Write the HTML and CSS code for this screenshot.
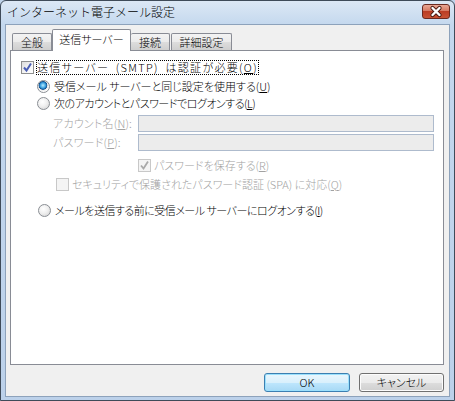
FILE: index.html
```html
<!DOCTYPE html>
<html lang="ja">
<head>
<meta charset="utf-8">
<title>インターネット電子メール設定</title>
<link rel="stylesheet" href="styles.css">
</head>
<body>
<div class="window">
  <div class="titlebar">
    <span class="title">インターネット電子メール設定</span>
    <span class="close">
      <svg width="28" height="15" viewBox="0 0 28 15">
        <path d="M10.5 4 L17.5 11 M17.5 4 L10.5 11" stroke="#4a1a12" stroke-width="4.2" stroke-linecap="round"/>
        <path d="M10.5 4 L17.5 11 M17.5 4 L10.5 11" stroke="#ffffff" stroke-width="2.4" stroke-linecap="round"/>
      </svg>
    </span>
  </div>
  <div class="client">
    <div class="tabs">
      <div class="tab t1">全般</div>
      <div class="tab sel">送信サーバー</div>
      <div class="tab t3">接続</div>
      <div class="tab t4">詳細設定</div>
    </div>
    <div class="panel">
      <div class="row r1">
        <span class="chk on"><svg width="11" height="11" viewBox="0 0 11 11"><path d="M2 5.5 L4.5 8.5 L9 1.5" fill="none" stroke="#4b5fb5" stroke-width="2"/></svg></span>
        <span class="lbl focus smtp">送信サーバー (SMTP) は認証が必要(<u>O</u>)</span>
      </div>
      <div class="row r2 ind">
        <span class="radio on"></span>
        <span class="lbl">受信メール サーバーと同じ設定を使用する(<u>U</u>)</span>
      </div>
      <div class="row r3 ind">
        <span class="radio"></span>
        <span class="lbl tight">次のアカウントとパスワードでログオンする(<u>L</u>)</span>
      </div>
      <div class="row r4 field">
        <span class="flbl dis">アカウント名(<u>N</u>):</span>
        <span class="input"></span>
      </div>
      <div class="row r5 field">
        <span class="flbl dis">パスワード(<u>P</u>):</span>
        <span class="input"></span>
      </div>
      <div class="row r6 save">
        <span class="chk disc"><svg width="11" height="11" viewBox="0 0 11 11"><path d="M2 5.5 L4.5 8.5 L9 1.5" fill="none" stroke="#a9a9a9" stroke-width="1.8"/></svg></span>
        <span class="lbl dis">パスワードを保存する(<u>R</u>)</span>
      </div>
      <div class="row r7 spa">
        <span class="chk disc"></span>
        <span class="lbl dis">セキュリティで保護されたパスワード認証 (SPA) に対応(<u>Q</u>)</span>
      </div>
      <div class="row r8 ind3">
        <span class="radio"></span>
        <span class="lbl tight">メールを送信する前に受信メール サーバーにログオンする(<u>I</u>)</span>
      </div>
    </div>
    <div class="buttons">
      <span class="btn ok">OK</span>
      <span class="btn cancel">キャンセル</span>
    </div>
  </div>
</div>
</body>
</html>
```
FILE: styles.css
```css
html, body {
  margin: 0;
  padding: 0;
  width: 455px;
  height: 401px;
  overflow: hidden;
  background: #bfd3ea;
}
body {
  font-family: "Noto Sans CJK JP", "Noto Sans", sans-serif;
  font-size: 11px;
  font-weight: 300;
  font-feature-settings: "palt";
  color: #000;
}
.window {
  width: 455px;
  height: 401px;
  box-sizing: border-box;
  border: 1px solid #3f4b59;
  border-radius: 6px 6px 0 0;
  background: linear-gradient(#dce8f5 0, #c4d8ee 24px, #bcd1ea 100%);
  padding: 0 4px 3px 4px;
  display: flex;
  flex-direction: column;
}
.titlebar {
  height: 23px;
  display: flex;
  align-items: center;
  justify-content: space-between;
  flex: none;
}
.title {
  padding-left: 2px;
  font-size: 12px;
  font-feature-settings: normal;
  line-height: 16px;
  margin-top: -2px;
}
.close {
  width: 28px;
  height: 15px;
  margin-top: -3px;
  box-sizing: border-box;
  border: 1px solid #6b2a20;
  border-radius: 3px;
  background: linear-gradient(#eaa794 0, #d67a63 45%, #bb3d24 50%, #c85234 100%);
  display: flex;
}
.close svg { display: block; margin: -1px; }
.client {
  flex: 1;
  background: #f0f0f0;
  border: 1px solid #8da2bb;
  padding: 4px 5px 0 4px;
  display: flex;
  flex-direction: column;
}
.tabs {
  display: flex;
  align-items: flex-end;
  height: 21px;
  padding-left: 2px;
  position: relative;
  z-index: 2;
}
.tab {
  box-sizing: border-box;
  height: 17px;
  border: 1px solid #898c95;
  border-bottom: none;
  background: linear-gradient(#f3f3f3 0, #ebebeb 50%, #dddddd 51%, #cfcfcf 100%);
  text-align: center;
  line-height: 16px;
  border-radius: 2px 2px 0 0;
}
.t1 { width: 40px; }
.sel {
  width: 79px;
  height: 22px;
  margin-bottom: -1px;
  background: #ffffff;
  line-height: 18px;
}
.t3 { width: 39px; border-left: none; }
.t4 { width: 61px; margin-left: 1px; }
.panel {
  box-sizing: border-box;
  height: 315px;
  background: #ffffff;
  border: 1px solid #898c95;
  padding: 7px 9px 0 10px;
}
.row {
  display: flex;
  align-items: center;
  height: 18px;
  line-height: 15px;
}
.r2 { margin-top: 1px; }
.r3 { height: 17px; }
.r4 { margin-top: 3px; height: 17px; }
.r5 { margin-top: 2px; height: 17px; }
.r6 { margin-top: 5px; }
.r7 { margin-top: 1px; }
.r8 { margin-top: 8px; }
.ind { padding-left: 16px; }
.ind3 { padding-left: 17px; }
.field { padding-left: 32px; }
.save { padding-left: 117px; }
.spa { padding-left: 35px; }
.flbl { width: 85px; flex: none; white-space: nowrap; letter-spacing: 0.2px; }
.input {
  flex: 1;
  height: 17px;
  box-sizing: border-box;
  border: 1px solid #aebbcd;
  background: #ececec;
}
.dis { color: #a2a2a2; }
.lbl { margin-left: 2px; white-space: nowrap; padding: 0 1px; }
.smtp { word-spacing: 3px; letter-spacing: 1.3px; }
.tight { letter-spacing: -0.5px; }
.focus { outline: 1px dotted #000; outline-offset: -1px; }
.chk {
  width: 13px;
  height: 13px;
  box-sizing: border-box;
  flex: none;
  border: 1px solid #8e8f8f;
  background: linear-gradient(135deg, #dcdcdc 0, #f6f6f6 60%, #ffffff 100%);
  display: flex;
  align-items: center;
  justify-content: center;
}
.chk.disc {
  border-color: #c8c8c8;
  background: #f4f4f4;
}
.chk svg { display: block; }
.radio {
  width: 13px;
  height: 13px;
  box-sizing: border-box;
  flex: none;
  border-radius: 50%;
  border: 1px solid #8a8e94;
  background: radial-gradient(circle at 40% 35%, #ffffff 0, #f0f0f0 45%, #cfcfcf 100%);
}
.radio.on {
  background: radial-gradient(circle at 45% 40%, #b9ecff 0, #3aa0e0 30%, #12508f 45%, #e8e8e8 52%, #ffffff 70%, #d8d8d8 100%);
}
.row .radio + .lbl { margin-left: 3px; }
.buttons {
  display: flex;
  justify-content: flex-end;
  gap: 9px;
  margin-top: 8px;
}
.btn {
  box-sizing: border-box;
  width: 86px;
  height: 19px;
  border-radius: 3px;
  text-align: center;
  line-height: 17px;
}
.ok {
  border: 1px solid #3c7fb1;
  background: linear-gradient(#eaf6fd 0, #d9f0fc 50%, #bee6fd 51%, #a7d9f5 100%);
  box-shadow: inset 0 0 0 1px #9be0fc;
}
.cancel {
  width: 85px;
  border: 1px solid #707070;
  background: linear-gradient(#f2f2f2 0, #ebebeb 50%, #dddddd 51%, #cfcfcf 100%);
  box-shadow: inset 0 0 0 1px #fcfcfc;
}
```
